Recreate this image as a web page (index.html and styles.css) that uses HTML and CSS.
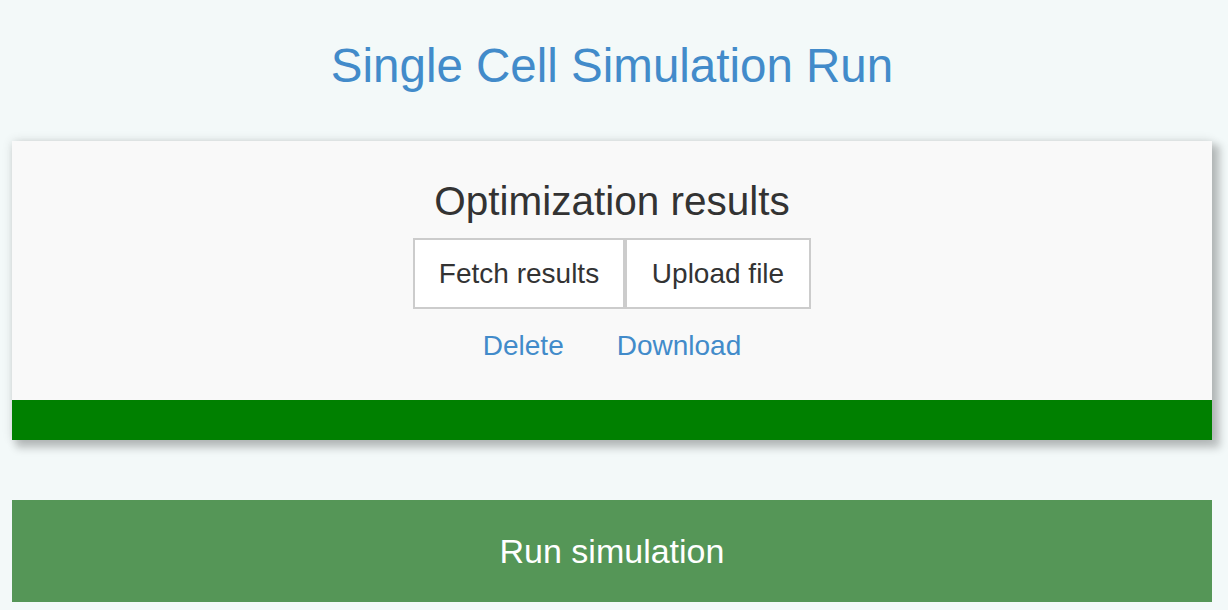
FILE: index.html
```html
<!DOCTYPE html>
<html>
<head>
<meta charset="utf-8">
<link rel="stylesheet" href="styles.css">
</head>
<body>
<h1 class="page-title">Single Cell Simulation Run</h1>
<section class="card">
  <div class="card-body">
    <h2 class="card-title">Optimization results</h2>
    <div class="btn-group">
      <button class="btn btn-fetch">Fetch results</button>
      <button class="btn btn-upload">Upload file</button>
    </div>
    <div class="links">
      <a class="link" href="#">Delete</a>
      <a class="link" href="#">Download</a>
    </div>
  </div>
  <div class="status-bar"></div>
</section>
<button class="run-btn">Run simulation</button>
</body>
</html>
```
FILE: styles.css
```css
html, body {
  margin: 0;
  padding: 0;
}
body {
  background: #f3f9f9;
  font-family: "Liberation Sans", Arial, sans-serif;
  color: #333;
  padding: 0 16px 0 12px;
  overflow: hidden;
  height: 610px;
  box-sizing: border-box;
}
.page-title {
  margin: 0;
  padding-top: 38px;
  height: 103px;
  box-sizing: border-box;
  text-align: center;
  font-size: 47.5px;
  font-weight: 400;
  line-height: 56px;
  color: #428bca;
}
.card {
  background: #f9f9f9;
  box-shadow: 0 0 10px rgba(0, 0, 0, 0.12), 6px 6px 8px 2px rgba(0, 0, 0, 0.22);
  margin-top: 38px;
}
.card-body {
  height: 259px;
  display: flex;
  flex-direction: column;
  align-items: center;
  padding-top: 36px;
  box-sizing: border-box;
}
.card-title {
  margin: 0;
  font-size: 40.5px;
  font-weight: 400;
  line-height: 48px;
  height: 61px;
  color: #333;
}
.btn-group {
  display: flex;
}
.btn {
  font-family: "Liberation Sans", Arial, sans-serif;
  font-size: 28px;
  color: #333;
  background: #fff;
  border: 2px solid #ccc;
  height: 71px;
  padding: 0;
  margin: 0;
}
.btn-fetch {
  width: 212px;
}
.btn-upload {
  width: 186px;
}
.links {
  display: flex;
  gap: 53px;
  margin-top: 20px;
}
.link {
  color: #428bca;
  font-size: 28px;
  text-decoration: none;
  line-height: 34px;
}
.status-bar {
  height: 40px;
  background: #008000;
}
.run-btn {
  display: block;
  width: 100%;
  margin-top: 60px;
  height: 102px;
  border: 0;
  background: #559657;
  color: #fff;
  font-family: "Liberation Sans", Arial, sans-serif;
  font-size: 34px;
  padding: 0;
}
```
